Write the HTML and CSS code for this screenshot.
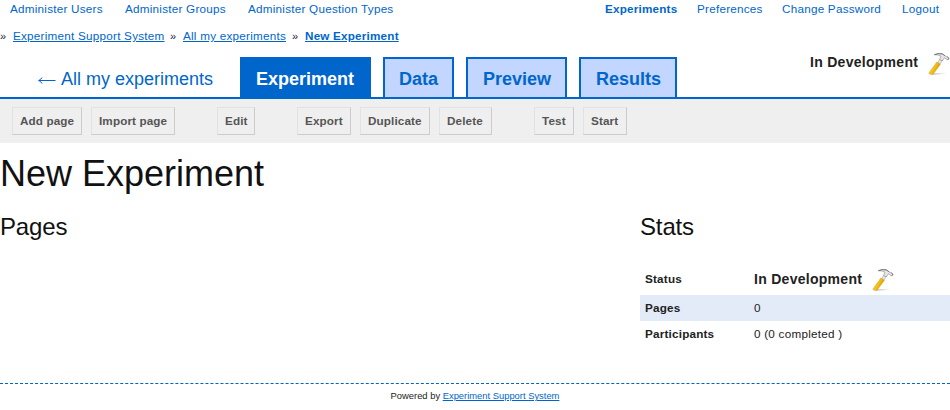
FILE: index.html
```html
<!DOCTYPE html>
<html lang="en">
<head>
<meta charset="utf-8">
<title>New Experiment</title>
<link rel="stylesheet" href="styles.css">
</head>
<body>
<svg class="defs" aria-hidden="true">
  <defs>
    <linearGradient id="handle" x1="0" y1="0" x2="1" y2="0.5"><stop offset="0" stop-color="#ffd53a"/><stop offset="0.6" stop-color="#f5bd14"/><stop offset="1" stop-color="#c89000"/></linearGradient>
    <linearGradient id="shadow"><stop offset="0" stop-color="#777" stop-opacity="0.6"/><stop offset="1" stop-color="#aaa" stop-opacity="0"/></linearGradient>
    <symbol id="hammer" viewBox="0 0 24 24">
      <path d="M4 21.4 19 20.6 17 22 4 22.8Z" fill="url(#shadow)"/>
      <path d="M11.6 7.6 9.6 10.8 11.8 12.3 14.6 8.2Z" fill="#e6e6e6" stroke="#999" stroke-width=".5"/>
      <path d="M8.8 10 12.4 12.3 5.2 22Q2.8 23.3 .8 21.2Z" fill="url(#handle)" stroke="#c8951a" stroke-width=".4"/>
      <path d="M6.4 2.7Q9.6 .8 14.6 1.9L17.2 4 19.5 4.6 21 6.2 19.9 8 18 7 16.6 5.7 14.3 8.8 11.5 7.5 13 4.3Q10 2.5 6.4 2.7Z" fill="#e6e6e6" stroke="#888" stroke-width=".6"/>
      <path d="M6.4 2.7Q10.5 .8 14.6 2L17 3.8M19.3 5 20.8 6.3 20 7.8" fill="none" stroke="#666" stroke-width=".8"/>
    </symbol>
  </defs>
</svg>
<header>
  <nav class="top">
    <a class="t1">Administer Users</a><a class="t2">Administer Groups</a><a class="t3">Administer Question Types</a>
    <a class="t4"><b>Experiments</b></a><a class="t5">Preferences</a><a class="t6">Change Password</a><a class="t7">Logout</a>
  </nav>
  <nav class="crumbs">
    <span>»</span><a class="c1">Experiment Support System</a><span>»</span><a class="c2">All my experiments</a><span>»</span><a class="c3"><b>New Experiment</b></a>
  </nav>
  <div class="tabbar">
    <a class="back"><svg class="arrow" viewBox="0 0 18 12"><path d="M.5 6.5H17.5M4 3.5Q3 5.5 .8 6.5 3 7.5 4 9.5" /></svg><span>All my experiments</span></a>
    <a class="tab active w1">Experiment</a><a class="tab w2">Data</a><a class="tab w3">Preview</a><a class="tab w4">Results</a>
    <div class="state"><strong>In Development</strong><svg class="hammer"><use href="#hammer"/></svg></div>
  </div>
</header>
<div class="toolbar">
  <div class="group"><a class="b1">Add page</a><a class="b2">Import page</a></div>
  <div class="group"><a class="b3">Edit</a></div>
  <div class="group"><a class="b4">Export</a><a class="b5">Duplicate</a><a class="b6">Delete</a></div>
  <div class="group"><a class="b7">Test</a><a class="b8">Start</a></div>
</div>
<main>
  <h1>New Experiment</h1>
  <div class="columns">
    <section><h2>Pages</h2></section>
    <section class="stats">
      <h2>Stats</h2>
      <dl>
        <div class="row status"><dt>Status</dt><dd><strong>In Development</strong><svg class="hammer"><use href="#hammer"/></svg></dd></div>
        <div class="row even"><dt>Pages</dt><dd>0</dd></div>
        <div class="row"><dt>Participants</dt><dd>0 (0 completed )</dd></div>
      </dl>
    </section>
  </div>
</main>
<footer>Powered by <a>Experiment Support System</a></footer>
</body>
</html>
```
FILE: styles.css
```css
* { box-sizing: border-box; }
body { margin: 0; width: 950px; height: 410px; overflow: hidden; background: #fff; color: #222; font: 11.7px/18px "Liberation Sans", Arial, sans-serif; letter-spacing: .24px; white-space: nowrap; }
a { color: #06c; }
b, dt { letter-spacing: .2px; }
.defs { display: block; width: 0; height: 0; }
.top { display: flex; height: 27px; padding-left: 10px; }
.t1 { width: 115px; }
.t2 { width: 123px; }
.t3 { width: 357px; }
.t4 { width: 92px; }
.t5 { width: 85px; }
.t6 { width: 120px; }
.crumbs { display: flex; height: 30px; }
.crumbs span { width: 13px; font-size: 11px; color: #224; }
.crumbs a { text-decoration: underline; }
.crumbs .c1 { margin-right: 6px; }
.c1 { width: 151px; }
.c2 { width: 109px; }
.tabbar { display: flex; height: 42px; border-bottom: 2px solid #06c; letter-spacing: 0; }
.back { display: flex; flex: none; align-items: center; width: 240px; height: 40px; padding: 3px 0 0 38px; font-size: 18px; }
.arrow { width: 18px; height: 12px; margin: 2px 5px 0 0; fill: none; stroke: #06c; stroke-width: 1; }
.tab { flex: none; height: 40px; margin-right: 12px; padding: 2px 0 0 14px; border: 2px solid #06c; border-bottom: 0; background: #c3d6ff; font-size: 18px; font-weight: bold; line-height: 36px; }
.active { background: #06c; color: #fff; }
.w1 { width: 131px; }
.w2 { width: 71px; }
.w3 { width: 101px; }
.w4 { width: 98px; }
.tab.w3, .tab.w4 { padding-left: 15px; }
.state { display: flex; margin-left: 121px; }
.state strong, .status strong { width: 118px; font-size: 14px; letter-spacing: .28px; }
.state strong { margin-top: -4px; }
.hammer { width: 24px; height: 24px; flex: none; }
.state .hammer { margin-top: -5px; }
.toolbar { display: flex; gap: 42px; height: 44px; padding: 8px 12px; background: #efefef; }
.group { display: flex; gap: 9px; }
.group a { height: 28px; padding-left: 7px; border: 1px solid; border-color: #e2e2e2 #ccc #ccc #e2e2e2; color: #555; font-weight: bold; letter-spacing: .12px; line-height: 26px; }
.b1, .b5 { width: 70px; }
.b2 { width: 84px; }
.b3 { width: 38px; }
.b4 { width: 54px; }
.b6 { width: 53px; }
.b7 { width: 40px; }
.b8 { width: 44px; }
h1, h2 { margin: 0; color: #111; font-weight: normal; letter-spacing: 0; }
h1 { height: 68px; padding-top: 13px; font-size: 36px; line-height: 36px; }
.columns { display: grid; grid-template-columns: 640px 310px; height: 172px; }
h2 { height: 54px; font-size: 24px; letter-spacing: -.15px; line-height: 32px; }
dl { margin: 0; }
.row { display: flex; height: 26px; padding-left: 5px; line-height: 26px; }
.status { height: 30px; line-height: 28px; }
.even { background: #e3ebf8; }
dt { width: 109px; font-weight: bold; }
dd { display: flex; margin: 0; }
.status .hammer { margin-top: 3px; }
footer { height: 27px; border-top: 1px dashed #06c; text-align: center; font-size: 9.4px; letter-spacing: 0; line-height: 24px; }
footer a { text-decoration: underline; }
```
